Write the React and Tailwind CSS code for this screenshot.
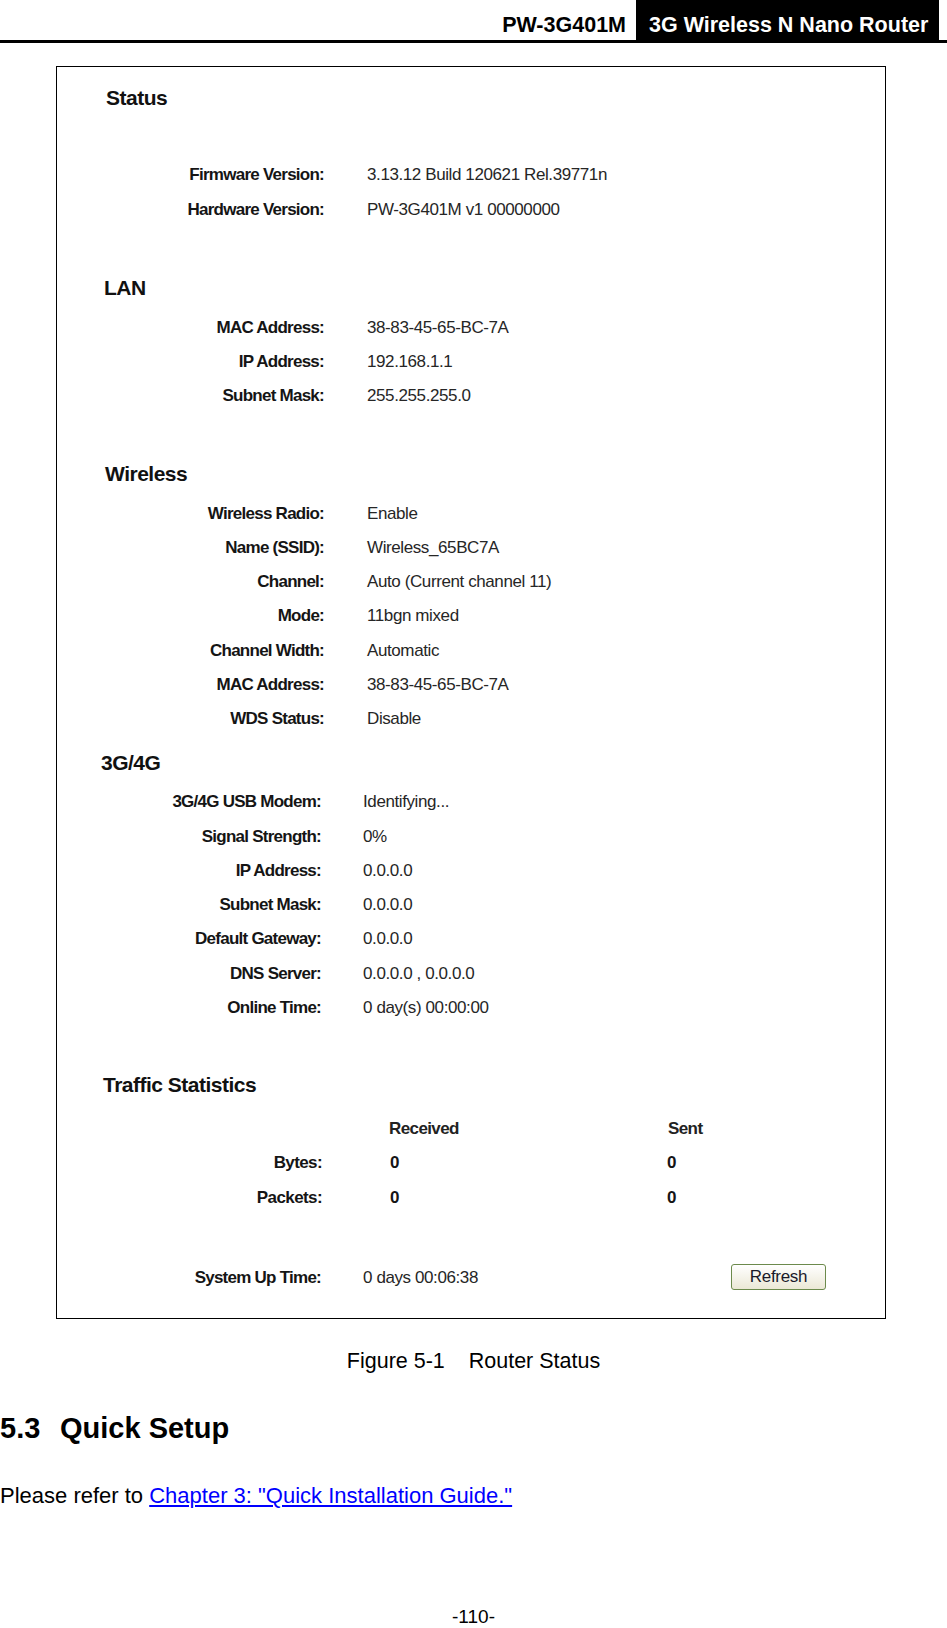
const font = { fontFamily: '"Liberation Sans", Arial, sans-serif' }

const statusRows = [
  ['Firmware Version:', '3.13.12 Build 120621 Rel.39771n'],
  ['Hardware Version:', 'PW-3G401M v1 00000000'],
]

const lanRows = [
  ['MAC Address:', '38-83-45-65-BC-7A'],
  ['IP Address:', '192.168.1.1'],
  ['Subnet Mask:', '255.255.255.0'],
]

const wirelessRows = [
  ['Wireless Radio:', 'Enable'],
  ['Name (SSID):', 'Wireless_65BC7A'],
  ['Channel:', 'Auto (Current channel 11)'],
  ['Mode:', '11bgn mixed'],
  ['Channel Width:', 'Automatic'],
  ['MAC Address:', '38-83-45-65-BC-7A'],
  ['WDS Status:', 'Disable'],
]

const modemRows = [
  ['3G/4G USB Modem:', 'Identifying...'],
  ['Signal Strength:', '0%'],
  ['IP Address:', '0.0.0.0'],
  ['Subnet Mask:', '0.0.0.0'],
  ['Default Gateway:', '0.0.0.0'],
  ['DNS Server:', '0.0.0.0 , 0.0.0.0'],
  ['Online Time:', '0 day(s) 00:00:00'],
]

function Heading({ children, indent }) {
  return (
    <div className={`h-[24px] leading-[24px] text-[21px] font-bold tracking-[-0.5px] text-[#111] ${indent}`}>
      {children}
    </div>
  )
}

function Row({ label, value, labelW = 'w-[267px]', gap = 'ml-[43px]' }) {
  return (
    <div className="flex h-[34.25px] items-center pt-[2px]">
      <div className={`${labelW} shrink-0 text-right text-[17px] font-bold tracking-[-0.75px] text-[#151515]`}>{label}</div>
      <div className={`${gap} text-[17px] tracking-[-0.4px] text-[#262626]`}>{value}</div>
    </div>
  )
}

function Rows({ rows, labelW, gap }) {
  return rows.map(([l, v], i) => <Row key={i} label={l} value={v} labelW={labelW} gap={gap} />)
}

function StatusPanel() {
  return (
    <div className="ml-[56px] w-[830px] h-[1253px] border border-black pt-[19px]">
      <Heading indent="ml-[49px]">Status</Heading>
      <div className="mt-[47px]">
        <Rows rows={statusRows} />
      </div>

      <div className="mt-[50px]">
        <Heading indent="ml-[47px]">LAN</Heading>
      </div>
      <div className="mt-[10px]">
        <Rows rows={lanRows} />
      </div>

      <div className="mt-[50px]">
        <Heading indent="ml-[48px]">Wireless</Heading>
      </div>
      <div className="mt-[9px]">
        <Rows rows={wirelessRows} />
      </div>

      <div className="mt-[16px]">
        <Heading indent="ml-[44px]">3G/4G</Heading>
      </div>
      <div className="mt-[9px]">
        <Rows rows={modemRows} labelW="w-[264px]" gap="ml-[42px]" />
      </div>

      <div className="mt-[49px]">
        <Heading indent="ml-[46px]">Traffic Statistics</Heading>
      </div>
      <div className="mt-[14px] text-[17px] font-bold tracking-[-0.6px] text-[#151515]">
        <div className="flex h-[34.25px] items-center pt-[2px]">
          <div className="w-[332px] shrink-0" />
          <div className="w-[279px] shrink-0 text-[#222]">Received</div>
          <div className="text-[#222]">Sent</div>
        </div>
        {[['Bytes:', '0', '0'], ['Packets:', '0', '0']].map(([l, a, b]) => (
          <div key={l} className="flex h-[34.25px] items-center pt-[2px]">
            <div className="w-[265px] shrink-0 text-right">{l}</div>
            <div className="ml-[68px] w-[277px] shrink-0">{a}</div>
            <div>{b}</div>
          </div>
        ))}
      </div>

      <div className="mt-[46px] flex h-[34.25px] items-center">
        <div className="w-[264px] shrink-0 pt-[2px] text-right text-[17px] font-bold tracking-[-0.75px] text-[#151515]">System Up Time:</div>
        <div className="ml-[42px] w-[368px] shrink-0 pt-[2px] text-[17px] tracking-[-0.4px] text-[#262626]">0 days 00:06:38</div>
        <button className="h-[26px] w-[95px] rounded-[3px] border border-[#6c8a4c] bg-gradient-to-b from-white to-[#ebe8d6] text-[17px] tracking-[-0.3px] text-[#1a1a2a] leading-none">
          Refresh
        </button>
      </div>
    </div>
  )
}

export default function App() {
  return (
    <div className="w-[947px] h-[1628px] bg-white text-black overflow-hidden" style={font}>
      <div className="flex h-[43px] items-start justify-end border-b-[3px] border-black pr-[8px]">
        <div className="flex h-[40px] items-center text-[21.5px] font-bold">
          <span className="mr-[10px] pt-[10px]">PW-3G401M</span>
          <span className="flex h-[40px] w-[303px] items-center bg-black pl-[13px] pt-[10px] text-white">
            3G Wireless N Nano Router
          </span>
        </div>
      </div>

      <div className="mt-[23px]">
        <StatusPanel />
      </div>

      <div className="mt-[30px] h-[24px] leading-[24px] text-center text-[21.5px] whitespace-pre">
        {'Figure 5-1    Router Status'}
      </div>

      <h2 className="mt-[39px] flex h-[34px] items-center text-[29px] font-bold">
        <span className="w-[60px]">5.3</span>
        <span>Quick Setup</span>
      </h2>

      <p className="mt-[37px] h-[26px] leading-[26px] text-[22px]">
        Please refer to{' '}
        <a href="#" className="text-[#0000ff] underline">Chapter 3: "Quick Installation Guide."</a>
      </p>

      <div className="mt-[98px] h-[20px] leading-[20px] text-center text-[19px]">-110-</div>
    </div>
  )
}
